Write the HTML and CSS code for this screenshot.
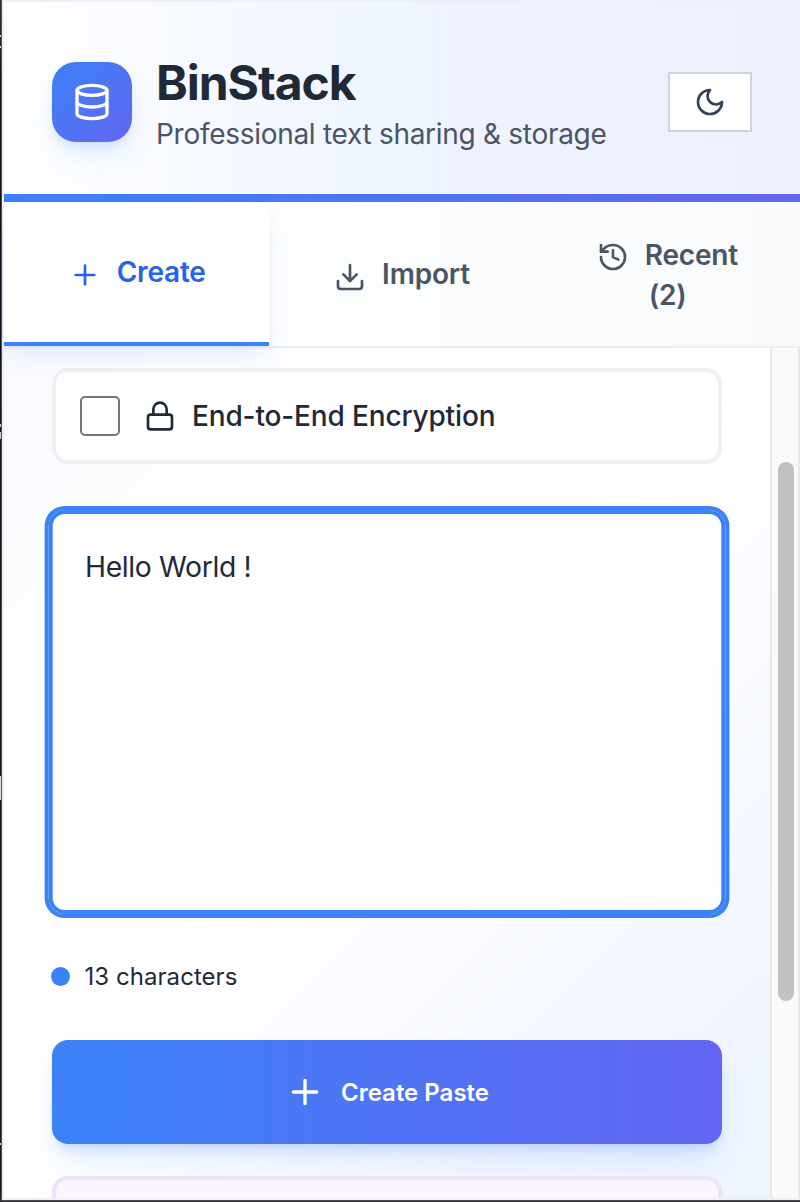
FILE: index.html
```html
<!DOCTYPE html>
<html lang="en">
<head>
<meta charset="utf-8">
<title>BinStack</title>
<link rel="stylesheet" href="styles.css">
</head>
<body>
<div class="desktop">
  <div class="popup">
    <header class="header">
      <div class="logo">
        <svg class="icon icon-lg" viewBox="0 0 24 24"><ellipse cx="12" cy="5" rx="9" ry="3"/><path d="M3 5v14a9 3 0 0 0 18 0V5"/><path d="M3 12a9 3 0 0 0 18 0"/></svg>
      </div>
      <div class="brand">
        <h1 class="title">BinStack</h1>
        <p class="subtitle">Professional text sharing &amp; storage</p>
      </div>
      <button class="theme-toggle" aria-label="Toggle theme">
        <svg class="icon" viewBox="0 0 24 24"><path d="M12 3a6 6 0 0 0 9 9 9 9 0 1 1-9-9Z"/></svg>
      </button>
    </header>
    <div class="accent"></div>
    <nav class="tabs">
      <button class="tab tab-active">
        <svg class="icon" viewBox="0 0 24 24"><path d="M5 12h14"/><path d="M12 5v14"/></svg>
        <span class="tab-label">Create</span>
      </button>
      <button class="tab tab-import">
        <svg class="icon" viewBox="0 0 24 24"><path d="M21 15v4a2 2 0 0 1-2 2H5a2 2 0 0 1-2-2v-4"/><path d="m7 10 5 5 5-5"/><path d="M12 15V3"/></svg>
        <span class="tab-label">Import</span>
      </button>
      <button class="tab tab-recent">
        <svg class="icon" viewBox="0 0 24 24"><path d="M3 12a9 9 0 1 0 9-9 9.75 9.75 0 0 0-6.74 2.74L3 8"/><path d="M3 3v5h5"/><path d="M12 7v5l4 2"/></svg>
        <span class="tab-label">Recent</span>
        <span class="tab-count">(2)</span>
      </button>
    </nav>
    <div class="body">
      <main class="content">
        <label class="encrypt">
          <input class="check" type="checkbox">
          <svg class="icon" viewBox="0 0 24 24"><rect x="3" y="11" width="18" height="11" rx="2"/><path d="M7 11V7a5 5 0 0 1 10 0v4"/></svg>
          <span class="encrypt-label">End-to-End Encryption</span>
        </label>
        <div class="editor">Hello World !</div>
        <div class="status"><span class="dot"></span><span class="count">13 characters</span></div>
        <button class="submit">
          <svg class="icon icon-lg" viewBox="0 0 24 24"><path d="M5 12h14"/><path d="M12 5v14"/></svg>
          <span class="submit-label">Create Paste</span>
        </button>
        <div class="result"></div>
      </main>
      <div class="scrollbar"><div class="thumb"></div></div>
    </div>
  </div>
</div>
</body>
</html>
```
FILE: styles.css
```css
* { box-sizing: border-box; margin: 0; padding: 0; }

body {
  width: 800px;
  height: 1202px;
  overflow: hidden;
  font-family: Inter, "Liberation Sans", sans-serif;
  color: #1f2937;
}

button { border: 0; background: none; font: inherit; color: inherit; }

/* Sliver of the window behind the popup, with bits of its light text */
.desktop {
  height: 1202px;
  padding: 0 0 2px 2px;
  background:
    linear-gradient(#ddd, #ddd) 0 35px / 1px 2px no-repeat,
    linear-gradient(#ddd, #ddd) 0 46px / 1px 2px no-repeat,
    linear-gradient(#ccc, #ccc) 0 424px / 1px 3px no-repeat,
    linear-gradient(#ccc, #ccc) 0 432px / 1px 7px no-repeat,
    linear-gradient(#ddd, #ddd) 0 776px / 1px 24px no-repeat,
    linear-gradient(#ddd, #ddd) 0 1143px / 1px 2px no-repeat,
    linear-gradient(#303038 0, #25252b 40px, #101012 90px, #161616 1190px, #2a2a30 100%);
}

.popup {
  height: 1200px;
  display: flex;
  flex-direction: column;
  border: solid #f0f0f4;
  border-width: 2px 0 2px 2px;
  box-shadow: 0 0 0 1px #505058;
  background: #fff;
}

.icon {
  width: 32px;
  height: 32px;
  flex: none;
  fill: none;
  stroke: currentColor;
  stroke-width: 2;
  stroke-linecap: round;
  stroke-linejoin: round;
}
.icon-lg { width: 40px; height: 40px; }

.header {
  height: 192px;
  flex: none;
  display: flex;
  align-items: center;
  padding: 8px 48px 0;
  background: linear-gradient(90deg, #fff, #f3f7ff 35%, #eef6ff 50%, #eff3ff 58%, #edf0fe);
}

.logo {
  width: 80px;
  height: 80px;
  display: grid;
  place-items: center;
  border-radius: 24px;
  color: #fff;
  background: linear-gradient(135deg, #3b82f6, #6366f1);
  box-shadow: 0 16px 32px -4px rgba(59, 130, 246, .12), 0 8px 12px -4px rgba(59, 130, 246, .15);
}

.brand { flex: 1; padding: 3px 0 0 24px; }
.title { font-size: 48px; line-height: 60px; font-weight: 700; letter-spacing: -1.05px; white-space: nowrap; }
.subtitle { margin-top: 1px; font-size: 28px; line-height: 40px; letter-spacing: -.29px; color: #4b5563; white-space: nowrap; }

.theme-toggle {
  width: 84px;
  height: 60px;
  display: grid;
  place-items: center;
  border: 2px solid #cbd5e1;
  background: #fff;
  color: #334155;
}

.accent { height: 8px; flex: none; background: linear-gradient(90deg, #3b82f6, #6366f1); }

.tabs {
  height: 146px;
  flex: none;
  display: grid;
  grid-template-columns: repeat(3, 1fr);
  border-bottom: 2px solid #eceef0;
  background: linear-gradient(90deg, #fdfdfd, #fcfdfd 50%, #f8fafc);
  position: relative;
  z-index: 1;
}

.tab {
  display: flex;
  align-items: center;
  justify-content: center;
  font-size: 28px;
  line-height: 40px;
  font-weight: 560;
  letter-spacing: -.2px;
  color: #4b5563;
}
.tab .icon { margin-top: 5px; }
.tab-active {
  gap: 16px;
  padding-left: 1px;
  border-bottom: 4px solid #3b82f6;
  border-top-right-radius: 12px;
  background: #fff;
  color: #2563eb;
  box-shadow: 0 16px 24px -6px rgba(59, 130, 246, .1), 0 4px 16px rgba(59, 130, 246, .03);
}
.tab-import { gap: 16px; }
.tab-recent {
  display: grid;
  grid-template-columns: 32px auto;
  align-content: center;
  column-gap: 16px;
  padding-top: 1px;
}
.tab-recent .icon { margin-top: 4px; }
.tab-count { grid-column: 2; justify-self: start; padding-left: 4px; }

.body { flex: 1; min-height: 0; display: flex; }

.content {
  flex: 1;
  height: 850px;
  overflow: hidden;
  padding: 20px 48px 0;
  background: linear-gradient(135deg, #f9fafe 0%, #fdfefe 25%, #fff 50%, #f5f8ff 75%, #f0f5ff 90%, #ecf6ff 100%);
}

.encrypt {
  height: 96px;
  display: flex;
  align-items: center;
  padding: 0 24px;
  border: 4px solid #eff0f1;
  border-radius: 16px;
  background: rgba(255, 255, 255, .8);
}
.check {
  appearance: none;
  width: 40px;
  height: 40px;
  margin-right: 24px;
  border: 2px solid #767676;
  border-radius: 5px;
  background: #fff;
}
.encrypt-label { padding-left: 16px; font-size: 28px; line-height: 40px; font-weight: 500; letter-spacing: -.15px; }

/* Focused state: ring plus a slight widening */
.editor {
  height: 404px;
  margin-top: 46px;
  padding: 33px 32px;
  border: 4px solid #3b82f6;
  border-radius: 16px;
  box-shadow: 0 0 0 4px #3b82f6;
  background: linear-gradient(135deg, #fff, #fff 75%, #fcfdff);
  font-size: 28px;
  line-height: 40px;
  letter-spacing: -.35px;
  transform: scaleX(1.01);
}

.status { height: 32px; margin-top: 46px; display: flex; align-items: center; font-size: 24px; line-height: 32px; }
.dot { width: 19px; height: 19px; margin: 0 15px 0 -1.5px; border-radius: 50%; background: #3b82f6; }
.count { padding-top: 2px; letter-spacing: .05px; }

.submit {
  width: 100%;
  height: 104px;
  margin-top: 48px;
  display: flex;
  align-items: center;
  justify-content: center;
  gap: 16px;
  border-radius: 16px;
  color: #fff;
  background: linear-gradient(90deg, #3b82f6, #6366f1);
  box-shadow: 0 20px 30px -6px rgba(59, 130, 246, .14), 0 8px 12px -4px rgba(59, 130, 246, .2);
  font-size: 24px;
  font-weight: 600;
}

.result {
  height: 120px;
  margin-top: 32px;
  border: 4px solid #efe2fd;
  border-radius: 16px;
  background: #faf5ff;
}

.scrollbar {
  width: 30px;
  flex: none;
  padding: 114px 4px 0 6px;
  border: solid #e8e8e8;
  border-width: 0 2px;
  background: #fafafa;
}
.thumb { width: 16px; height: 539px; border-radius: 8px; background: #c1c1c1; }
```
